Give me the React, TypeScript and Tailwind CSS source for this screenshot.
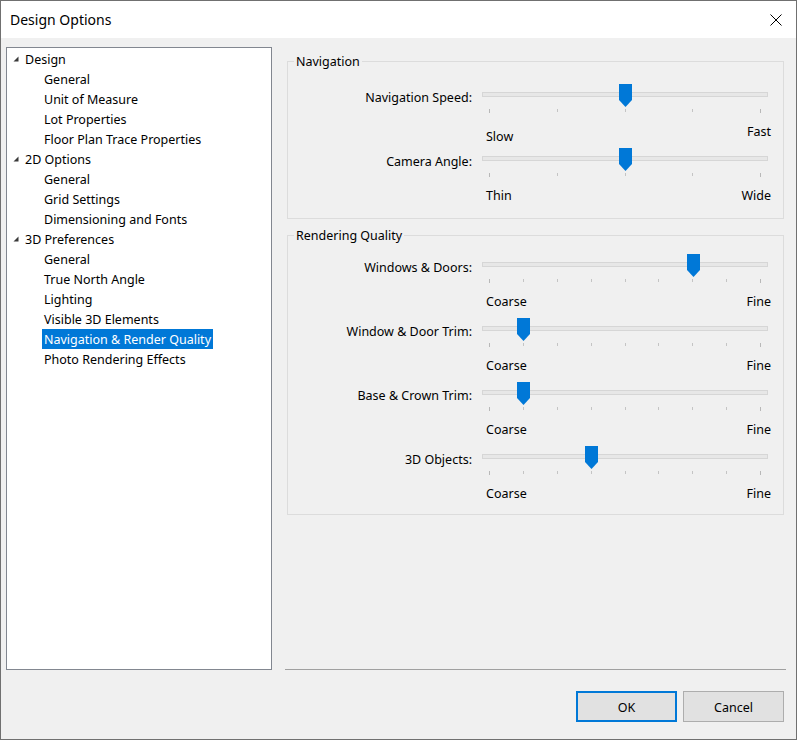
import React from 'react'

type TreeNode = {
  label: string
  children: string[]
}

type SliderRow = {
  label: string
  steps: number
  value: number
  low: string
  high: string
  lowOffset?: boolean
}

const tree: TreeNode[] = [
  { label: 'Design', children: ['General', 'Unit of Measure', 'Lot Properties', 'Floor Plan Trace Properties'] },
  { label: '2D Options', children: ['General', 'Grid Settings', 'Dimensioning and Fonts'] },
  {
    label: '3D Preferences',
    children: ['General', 'True North Angle', 'Lighting', 'Visible 3D Elements', 'Navigation & Render Quality', 'Photo Rendering Effects'],
  },
]

const selected = 'Navigation & Render Quality'

const navigation: SliderRow[] = [
  { label: 'Navigation Speed:', steps: 5, value: 2, low: 'Slow', high: 'Fast', lowOffset: true },
  { label: 'Camera Angle:', steps: 5, value: 2, low: 'Thin', high: 'Wide' },
]

const rendering: SliderRow[] = [
  { label: 'Windows & Doors:', steps: 9, value: 6, low: 'Coarse', high: 'Fine' },
  { label: 'Window & Door Trim:', steps: 9, value: 1, low: 'Coarse', high: 'Fine' },
  { label: 'Base & Crown Trim:', steps: 9, value: 1, low: 'Coarse', high: 'Fine' },
  { label: '3D Objects:', steps: 9, value: 3, low: 'Coarse', high: 'Fine' },
]

function Expander() {
  return (
    <svg width="6" height="6" viewBox="0 0 6 6" className="shrink-0">
      <path d="M5.5 0.5 L5.5 5.5 L0.5 5.5 Z" fill="#3a3a3a" />
    </svg>
  )
}

function Slider({ row }: { row: SliderRow }) {
  // ticks sit 7px in from either end of the 286px track
  const thumbX = 7 + (row.value * 272) / (row.steps - 1)
  return (
    <div className="grid h-[64px] grid-cols-[184px_290px] gap-x-[10px]">
      <div className="whitespace-nowrap pt-[6px] text-right leading-[16px]">{row.label}</div>
      <div className="relative">
        <div className="mt-[8px] h-[5px] w-[286px] border border-[#d6d6d6] bg-[#e7e7e7]" />
        <div className="mt-[12px] flex h-[4px] w-[286px] items-start justify-between px-[7px]">
          {Array.from({ length: row.steps }).map((_, i) => (
            <span
              key={i}
              className={
                i === 0 || i === row.steps - 1
                  ? 'h-[4px] w-px bg-[#b8b8b8]'
                  : 'h-[3px] w-px bg-[#c4c4c4]'
              }
            />
          ))}
        </div>
        <div className="mt-[11px] flex items-start justify-between pl-[4px] pr-[1px] leading-[16px]">
          <span className={row.lowOffset ? 'mt-[5px]' : ''}>{row.low}</span>
          <span>{row.high}</span>
        </div>
        <svg
          width="13"
          height="23"
          viewBox="0 0 13 23"
          className="absolute top-0"
          style={{ left: thumbX - 6 }}
        >
          <path d="M0 0 H13 V16 L6.5 23 L0 16 Z" fill="#0078d7" />
        </svg>
      </div>
    </div>
  )
}

function GroupBox({ title, rows, className }: { title: string; rows: SliderRow[]; className: string }) {
  return (
    <div className={`mx-[2px] border border-[#dcdcdc] ${className}`}>
      <div className="-mt-[10px] ml-[6px] w-fit bg-[#f0f0f0] px-[2px] pt-[2px] leading-[16px]">{title}</div>
      {rows.map((r) => (
        <Slider key={r.label} row={r} />
      ))}
    </div>
  )
}

export default function App() {
  return (
    <div className="flex h-[740px] w-[797px] flex-col border border-[#707070] bg-[#f0f0f0] font-['Noto_Sans',sans-serif] text-[12.5px] text-black">
      <div className="flex h-[37px] shrink-0 items-center justify-between bg-white pl-[9px] pr-[14px]">
        <span className="text-[14px]">Design Options</span>
        <svg width="12" height="12" viewBox="0 0 12 12">
          <path d="M0.5 0.5 L11.5 11.5 M11.5 0.5 L0.5 11.5" stroke="#000" strokeWidth="1" />
        </svg>
      </div>

      <div className="flex pl-[5px] pt-[9px]">
        <div className="h-[623px] w-[266px] shrink-0 border border-[#828790] bg-white pt-[1px]">
          {tree.map((node) => (
            <div key={node.label}>
              <div className="flex h-[20px] items-center pl-[6px]">
                <Expander />
                <span className="ml-[6px] pt-[2px] leading-[16px]">{node.label}</span>
              </div>
              {node.children.map((c) => (
                <div key={node.label + c} className="flex h-[20px] items-stretch pl-[35px]">
                  <span
                    className={
                      c === selected && node.label === '3D Preferences'
                        ? 'flex items-center whitespace-nowrap bg-[#0078d7] px-[2px] pt-[2px] text-white'
                        : 'flex items-center whitespace-nowrap px-[2px] pt-[2px]'
                    }
                  >
                    {c}
                  </span>
                </div>
              ))}
            </div>
          ))}
        </div>

        <div className="ml-[13px] flex h-[623px] w-[501px] flex-col">
          <GroupBox title="Navigation" rows={navigation} className="mt-[14px] pb-[6px] [&>div:nth-child(2)]:mt-[14px]" />
          <GroupBox title="Rendering Quality" rows={rendering} className="mt-[16px] pb-[4px] [&>div:nth-child(2)]:mt-[10px]" />
          <div className="flex-1" />
          <div className="h-px bg-[#a0a0a0]" />
        </div>
      </div>

      <div className="flex justify-end gap-[6px] pr-[12px] pt-[21px]">
        <button className="h-[31px] w-[101px] border-2 border-[#0078d7] bg-[#e1e1e1] pt-[3px]">OK</button>
        <button className="h-[31px] w-[101px] border border-[#adadad] bg-[#e1e1e1] pt-[3px]">Cancel</button>
      </div>
    </div>
  )
}
